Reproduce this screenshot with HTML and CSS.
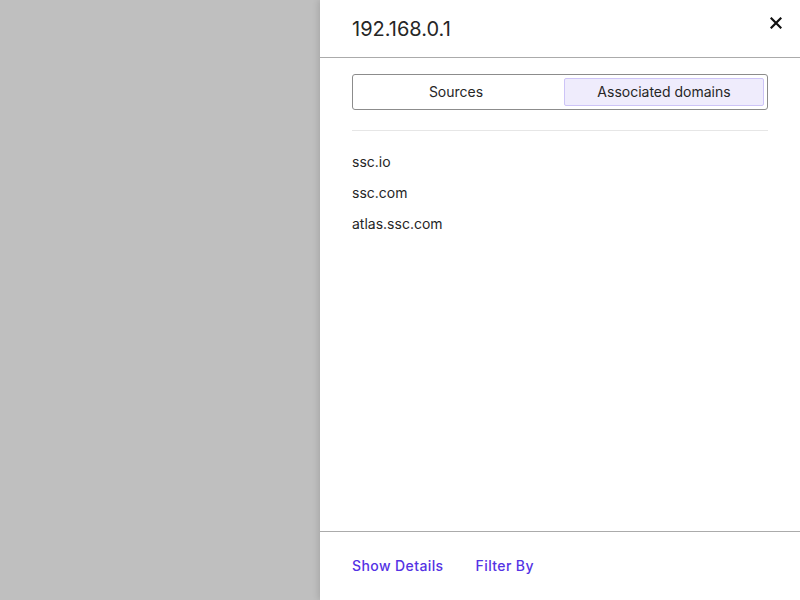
FILE: index.html
```html
<!DOCTYPE html>
<html>
<head>
<meta charset="utf-8">
<link rel="stylesheet" href="styles.css">
</head>
<body>
<div class="page">
  <div class="overlay"></div>
  <aside class="panel">
    <header class="panel-header">
      <h1 class="title">192.168.0.1</h1>
      <button class="close" aria-label="Close">
        <svg width="12" height="12" viewBox="0 0 12 12"><path d="M1.5 1.5L10.5 10.5M10.5 1.5L1.5 10.5" stroke="#111" stroke-width="2.2" stroke-linecap="square"/></svg>
      </button>
    </header>
    <div class="panel-body">
      <div class="tabs">
        <div class="tab">Sources</div>
        <div class="tab active">Associated domains</div>
      </div>
      <div class="divider"></div>
      <ul class="list">
        <li>ssc.io</li>
        <li>ssc.com</li>
        <li>atlas.ssc.com</li>
      </ul>
    </div>
    <footer class="panel-footer">
      <a class="link">Show Details</a>
      <a class="link">Filter By</a>
    </footer>
  </aside>
</div>
</body>
</html>
```
FILE: styles.css
```css
* { box-sizing: border-box; }
html, body { margin: 0; padding: 0; }
body {
  font-family: Inter, "Noto Sans", sans-serif;
  color: #262626;
  width: 800px;
  height: 600px;
  overflow: hidden;
}
.page { display: flex; height: 600px; }
.overlay { flex: 0 0 320px; background: #bfbfbf; }
.panel {
  flex: 0 0 480px;
  background: #fff;
  display: flex;
  flex-direction: column;
  box-shadow: -2px 0 6px rgba(0,0,0,0.12);
}
.panel-header {
  height: 58px;
  border-bottom: 1px solid #ababab;
  display: flex;
  align-items: center;
  justify-content: space-between;
  padding: 0 18px 0 32px;
}
.title {
  margin: 0;
  font-size: 20px;
  font-weight: 400;
  color: #262626;
  margin-top: 1px;
}
.close {
  border: 0;
  background: none;
  padding: 0;
  width: 12px;
  height: 12px;
  display: flex;
  margin-top: -11px;
  cursor: pointer;
}
.panel-body { flex: 1; padding: 16px 32px 0; }
.tabs {
  display: grid;
  grid-template-columns: 1fr 1fr;
  gap: 8px;
  height: 36px;
  padding: 3px;
  border: 1px solid #8c8c8c;
  border-radius: 3px;
}
.tab {
  display: flex;
  align-items: center;
  justify-content: center;
  font-size: 14px;
  color: #262626;
  border: 1px solid transparent;
  border-radius: 2px;
  padding-bottom: 2px;
}
.tab.active {
  background: #efecfc;
  border-color: #cdc4f7;
}
.divider { height: 1px; background: #e6e6e6; margin-top: 20px; }
.list { list-style: none; margin: 0; padding: 15px 0 0; }
.list li { font-size: 14px; line-height: 31px; color: #262626; }
.panel-footer {
  height: 69px;
  border-top: 1px solid #ababab;
  display: flex;
  align-items: center;
  gap: 32px;
  padding: 0 32px 2px;
}
.link {
  color: #5433e4;
  font-size: 14px;
  font-weight: 500;
  letter-spacing: 0.4px;
  cursor: pointer;
}
```
